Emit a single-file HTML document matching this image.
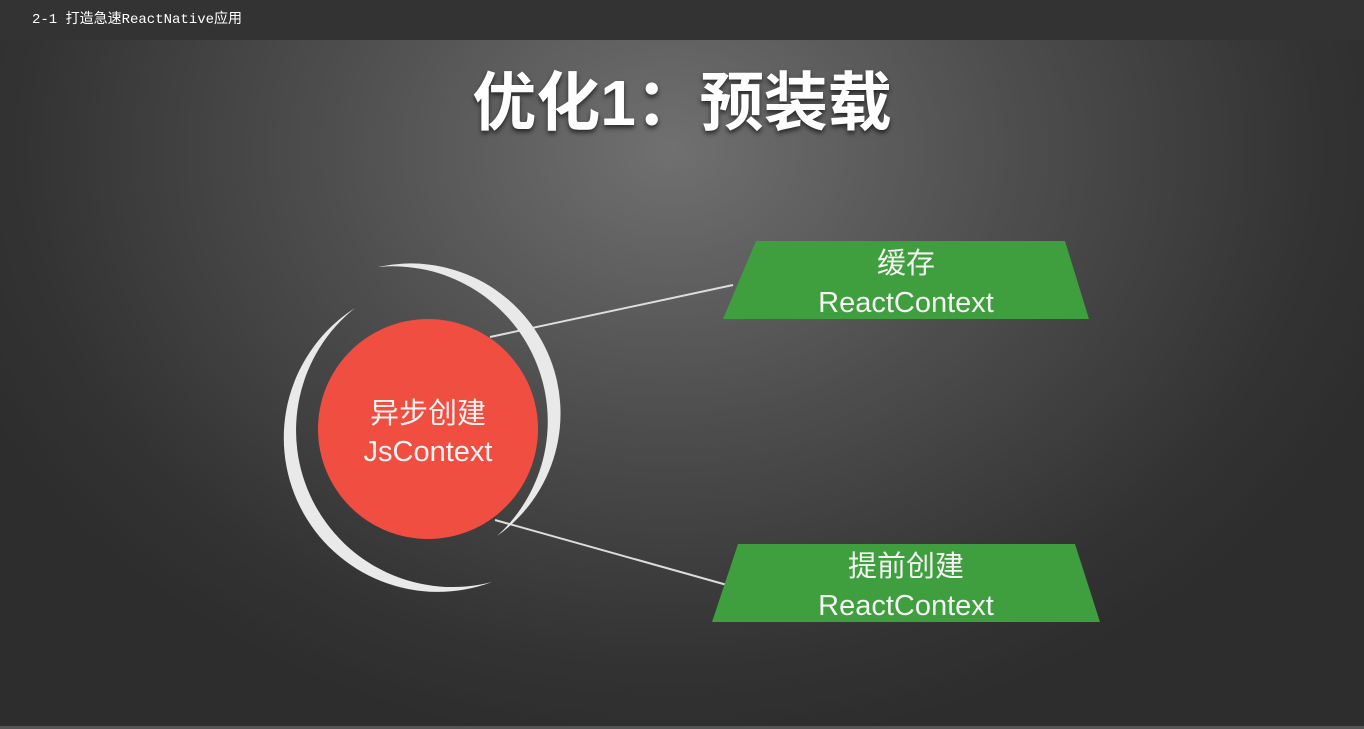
<!DOCTYPE html>
<html><head><meta charset="utf-8"><style>
html,body{margin:0;padding:0;width:1364px;height:729px;overflow:hidden;background:#2b2b2c;}
.top{position:absolute;left:0;top:0;width:1364px;height:40px;background:#333334;}
.top span{position:absolute;left:32px;top:8px;color:#fff;font:14px "Liberation Mono","Noto Sans CJK SC",monospace;}
.slide{position:absolute;left:0;top:40px;width:1364px;height:686px;background:radial-gradient(ellipse 760px 600px at 670px 110px,#707071 0%,#4e4e4f 45%,#333334 85%,#2d2d2e 100%);}
.bot{position:absolute;left:0;top:726px;width:1364px;height:3px;background:#555;}
.title{position:absolute;left:0;width:1364px;top:52px;text-align:center;color:#fff;font:bold 64px "Liberation Sans","Noto Sans CJK SC",sans-serif;text-shadow:0 3px 5px rgba(0,0,0,.6);}
svg{position:absolute;left:0;top:0;}
.t{position:absolute;color:#f4f4f4;font:29px "Liberation Sans","Noto Sans CJK SC",sans-serif;text-align:center;}
</style></head><body>
<div class="top"><span>2-1 打造急速ReactNative应用</span></div>
<div class="slide"></div>
<div class="bot"></div>
<div class="title">优化1：预装载</div>
<svg width="1364" height="729">
<line x1="490" y1="337" x2="733" y2="285" stroke="#ddd" stroke-width="2"/>
<line x1="495" y1="520" x2="727" y2="585" stroke="#ddd" stroke-width="2"/>
<path d="M378,267 A150,150 0 0 1 497,536 A155,155 0 0 0 378,267 Z" fill="#e9e9ea"/>
<path d="M355,308 A154,154 0 0 0 492,582 A156.6,156.6 0 0 1 355,308 Z" fill="#e9e9ea"/>
<circle cx="428" cy="429" r="110" fill="#f04e40"/>
<polygon points="756,241 1065,241 1089,319 723,319" fill="#3f9e3d"/>
<polygon points="738,544 1075,544 1100,622 712,622" fill="#3f9e3d"/>
</svg>
<div class="t" style="left:298px;top:395px;width:260px;line-height:38px;">异步创建<br>JsContext</div>
<div class="t" style="left:706px;top:245px;width:400px;line-height:39px;">缓存<br>ReactContext</div>
<div class="t" style="left:706px;top:548px;width:400px;line-height:39px;">提前创建<br>ReactContext</div>
</body></html>
